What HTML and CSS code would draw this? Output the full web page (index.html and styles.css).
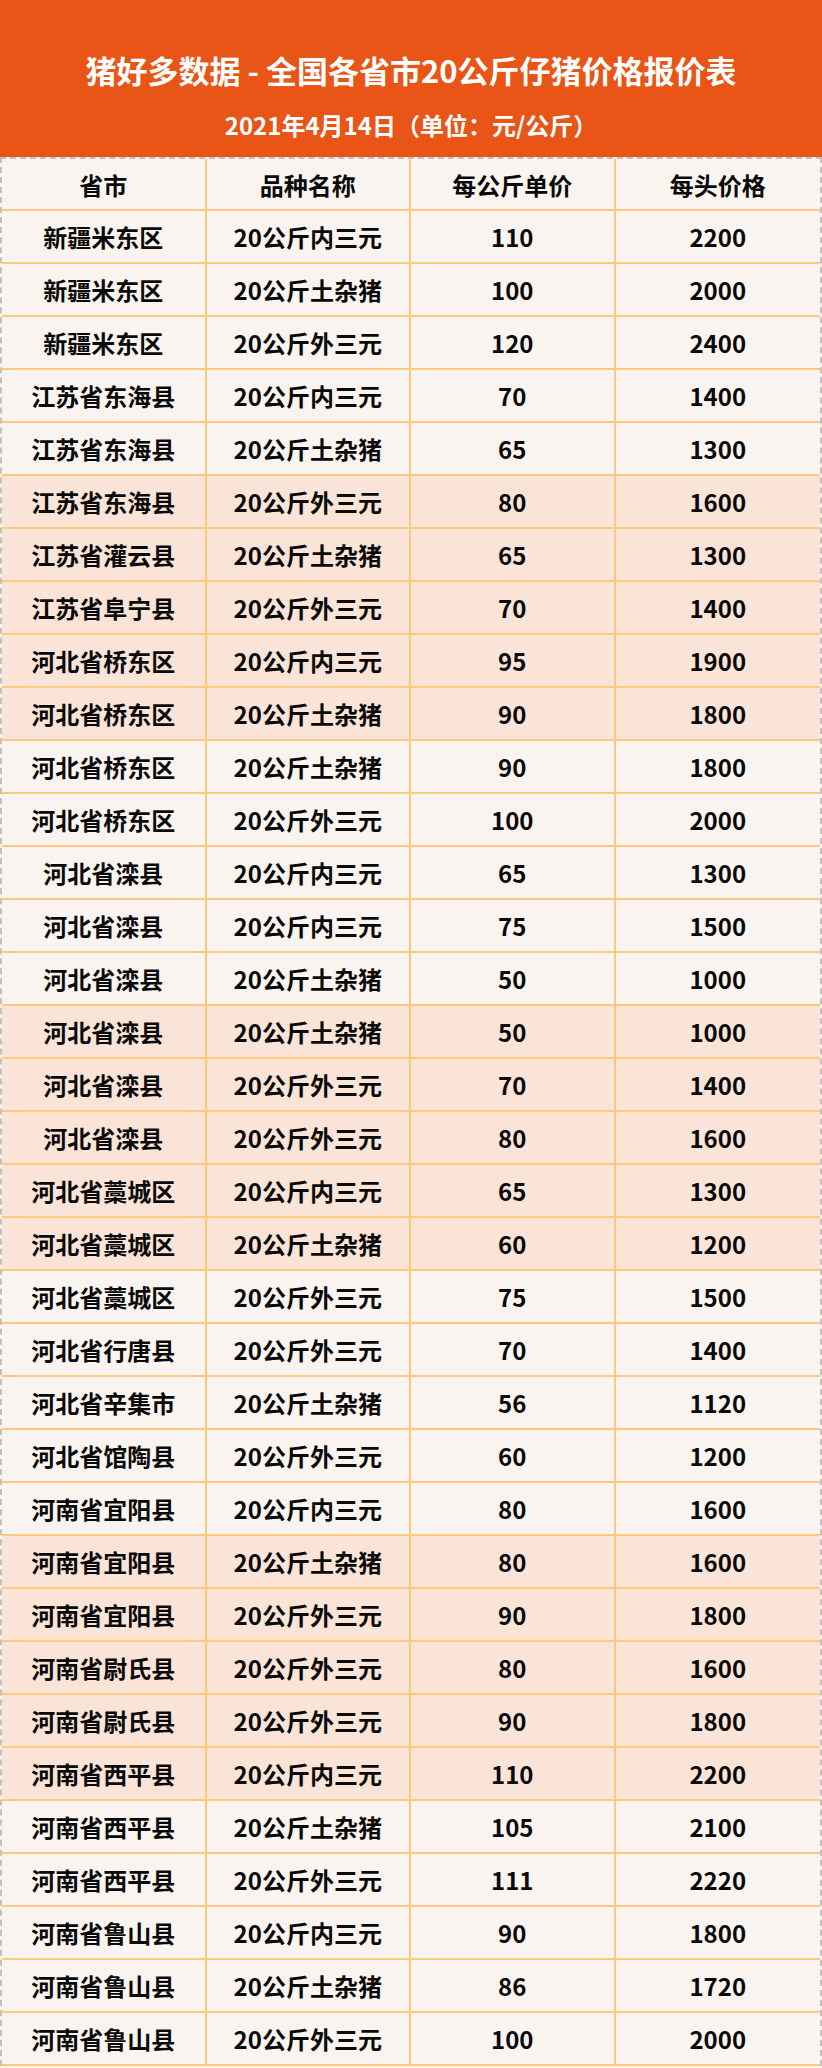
FILE: index.html
```html
<!DOCTYPE html>
<html lang="zh-CN">
<head>
<meta charset="utf-8">
<title>猪好多数据 - 全国各省市20公斤仔猪价格报价表</title>
<link rel="stylesheet" href="styles.css">
</head>
<body>
<div class="page">
  <header class="banner">
    <h1 class="title">猪好多数据 - 全国各省市20公斤仔猪价格报价表</h1>
    <p class="subtitle">2021年4月14日（单位：元/公斤）</p>
  </header>
  <div class="table">
    <div class="row head"><div class="cell">省市</div><div class="cell">品种名称</div><div class="cell">每公斤单价</div><div class="cell">每头价格</div></div>
    <div class="row"><div class="cell">新疆米东区</div><div class="cell">20公斤内三元</div><div class="cell">110</div><div class="cell">2200</div></div>
    <div class="row"><div class="cell">新疆米东区</div><div class="cell">20公斤土杂猪</div><div class="cell">100</div><div class="cell">2000</div></div>
    <div class="row"><div class="cell">新疆米东区</div><div class="cell">20公斤外三元</div><div class="cell">120</div><div class="cell">2400</div></div>
    <div class="row"><div class="cell">江苏省东海县</div><div class="cell">20公斤内三元</div><div class="cell">70</div><div class="cell">1400</div></div>
    <div class="row"><div class="cell">江苏省东海县</div><div class="cell">20公斤土杂猪</div><div class="cell">65</div><div class="cell">1300</div></div>
    <div class="row hl"><div class="cell">江苏省东海县</div><div class="cell">20公斤外三元</div><div class="cell">80</div><div class="cell">1600</div></div>
    <div class="row hl"><div class="cell">江苏省灌云县</div><div class="cell">20公斤土杂猪</div><div class="cell">65</div><div class="cell">1300</div></div>
    <div class="row hl"><div class="cell">江苏省阜宁县</div><div class="cell">20公斤外三元</div><div class="cell">70</div><div class="cell">1400</div></div>
    <div class="row hl"><div class="cell">河北省桥东区</div><div class="cell">20公斤内三元</div><div class="cell">95</div><div class="cell">1900</div></div>
    <div class="row hl"><div class="cell">河北省桥东区</div><div class="cell">20公斤土杂猪</div><div class="cell">90</div><div class="cell">1800</div></div>
    <div class="row"><div class="cell">河北省桥东区</div><div class="cell">20公斤土杂猪</div><div class="cell">90</div><div class="cell">1800</div></div>
    <div class="row"><div class="cell">河北省桥东区</div><div class="cell">20公斤外三元</div><div class="cell">100</div><div class="cell">2000</div></div>
    <div class="row"><div class="cell">河北省滦县</div><div class="cell">20公斤内三元</div><div class="cell">65</div><div class="cell">1300</div></div>
    <div class="row"><div class="cell">河北省滦县</div><div class="cell">20公斤内三元</div><div class="cell">75</div><div class="cell">1500</div></div>
    <div class="row"><div class="cell">河北省滦县</div><div class="cell">20公斤土杂猪</div><div class="cell">50</div><div class="cell">1000</div></div>
    <div class="row hl"><div class="cell">河北省滦县</div><div class="cell">20公斤土杂猪</div><div class="cell">50</div><div class="cell">1000</div></div>
    <div class="row hl"><div class="cell">河北省滦县</div><div class="cell">20公斤外三元</div><div class="cell">70</div><div class="cell">1400</div></div>
    <div class="row hl"><div class="cell">河北省滦县</div><div class="cell">20公斤外三元</div><div class="cell">80</div><div class="cell">1600</div></div>
    <div class="row hl"><div class="cell">河北省藁城区</div><div class="cell">20公斤内三元</div><div class="cell">65</div><div class="cell">1300</div></div>
    <div class="row hl"><div class="cell">河北省藁城区</div><div class="cell">20公斤土杂猪</div><div class="cell">60</div><div class="cell">1200</div></div>
    <div class="row"><div class="cell">河北省藁城区</div><div class="cell">20公斤外三元</div><div class="cell">75</div><div class="cell">1500</div></div>
    <div class="row"><div class="cell">河北省行唐县</div><div class="cell">20公斤外三元</div><div class="cell">70</div><div class="cell">1400</div></div>
    <div class="row"><div class="cell">河北省辛集市</div><div class="cell">20公斤土杂猪</div><div class="cell">56</div><div class="cell">1120</div></div>
    <div class="row"><div class="cell">河北省馆陶县</div><div class="cell">20公斤外三元</div><div class="cell">60</div><div class="cell">1200</div></div>
    <div class="row"><div class="cell">河南省宜阳县</div><div class="cell">20公斤内三元</div><div class="cell">80</div><div class="cell">1600</div></div>
    <div class="row hl"><div class="cell">河南省宜阳县</div><div class="cell">20公斤土杂猪</div><div class="cell">80</div><div class="cell">1600</div></div>
    <div class="row hl"><div class="cell">河南省宜阳县</div><div class="cell">20公斤外三元</div><div class="cell">90</div><div class="cell">1800</div></div>
    <div class="row hl"><div class="cell">河南省尉氏县</div><div class="cell">20公斤外三元</div><div class="cell">80</div><div class="cell">1600</div></div>
    <div class="row hl"><div class="cell">河南省尉氏县</div><div class="cell">20公斤外三元</div><div class="cell">90</div><div class="cell">1800</div></div>
    <div class="row hl"><div class="cell">河南省西平县</div><div class="cell">20公斤内三元</div><div class="cell">110</div><div class="cell">2200</div></div>
    <div class="row"><div class="cell">河南省西平县</div><div class="cell">20公斤土杂猪</div><div class="cell">105</div><div class="cell">2100</div></div>
    <div class="row"><div class="cell">河南省西平县</div><div class="cell">20公斤外三元</div><div class="cell">111</div><div class="cell">2220</div></div>
    <div class="row"><div class="cell">河南省鲁山县</div><div class="cell">20公斤内三元</div><div class="cell">90</div><div class="cell">1800</div></div>
    <div class="row"><div class="cell">河南省鲁山县</div><div class="cell">20公斤土杂猪</div><div class="cell">86</div><div class="cell">1720</div></div>
    <div class="row"><div class="cell">河南省鲁山县</div><div class="cell">20公斤外三元</div><div class="cell">100</div><div class="cell">2000</div></div>
  </div>
</div>
</body>
</html>
```

FILE: styles.css
```css
* { box-sizing: border-box; }
html, body { margin: 0; padding: 0; }
body {
  font-family: "Noto Sans CJK SC", "Microsoft YaHei", sans-serif;
  background: #f9f4f0;
  color: #0a0a0a;
}
.page { width: 822px; }
.banner {
  background: #e85517;
  height: 157px;
  color: #fff;
  display: flex;
  flex-direction: column;
  align-items: center;
  padding-top: 47px;
}
.title {
  margin: 0;
  font-size: 31px;
  font-weight: 700;
  line-height: 46px;
}
.subtitle {
  margin: 17px 0 0;
  font-size: 24px;
  font-weight: 700;
  line-height: 30px;
}
.table {
  border-top: 2px dashed #c4c0bc;
  border-left: 2px dashed #c4c0bc;
  border-right: 2px dashed #c4c0bc;
}
.row {
  display: grid;
  grid-template-columns: repeat(4, 1fr);
  height: 53px;
  border-bottom: 2px solid #fdc97c;
  background: #f9f4f0;
}
.row.head { height: 52px; }
.row.hl { background: #fae3d7; }
.cell {
  display: flex;
  align-items: center;
  justify-content: center;
  font-size: 24px;
  font-weight: 700;
  border-right: 2px solid #fdc97c;
  white-space: nowrap;
}
.cell:last-child { border-right: none; }
```
